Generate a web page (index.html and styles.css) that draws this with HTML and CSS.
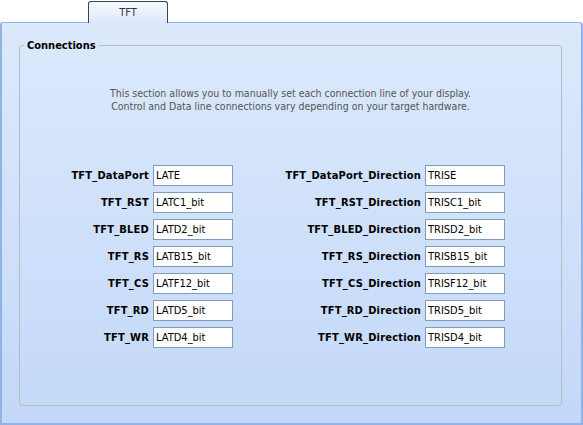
FILE: index.html
```html
<html>
    <head>
        <meta charset="utf-8">
        <link rel="stylesheet" href="styles.css">
    </head>
    <body>
        <section class="window">
            <div class="tabs">
                <div class="tab">TFT</div>
            </div>

            <div class="panel">
                <fieldset class="group">
                    <legend>Connections</legend>

                    <p class="intro">
                        This section allows you to manually set each connection line of your display.<br>
                        Control and Data line connections vary depending on your target hardware.
                    </p>

                    <div class="pins">
                        <label>TFT_DataPort</label><input type="text" value="LATE">
                        <label>TFT_DataPort_Direction</label><input type="text" value="TRISE">

                        <label>TFT_RST</label><input type="text" value="LATC1_bit">
                        <label>TFT_RST_Direction</label><input type="text" value="TRISC1_bit">

                        <label>TFT_BLED</label><input type="text" value="LATD2_bit">
                        <label>TFT_BLED_Direction</label><input type="text" value="TRISD2_bit">

                        <label>TFT_RS</label><input type="text" value="LATB15_bit">
                        <label>TFT_RS_Direction</label><input type="text" value="TRISB15_bit">

                        <label>TFT_CS</label><input type="text" value="LATF12_bit">
                        <label>TFT_CS_Direction</label><input type="text" value="TRISF12_bit">

                        <label>TFT_RD</label><input type="text" value="LATD5_bit">
                        <label>TFT_RD_Direction</label><input type="text" value="TRISD5_bit">

                        <label>TFT_WR</label><input type="text" value="LATD4_bit">
                        <label>TFT_WR_Direction</label><input type="text" value="TRISD4_bit">
                    </div>
                </fieldset>
            </div>
        </section>
    </body>
</html>
```

FILE: styles.css
```css
* { box-sizing: border-box; }

html, body {
    margin: 0;
    padding: 0;
    user-select: none;
}

body {
    font-family: "DejaVu Sans Condensed", "DejaVu Sans", sans-serif;
    font-size: 11px;
    color: #000;
    background: #fff;
}

.window {
    width: 583px;
    height: 425px;
}

.tabs {
    height: 23px;
    padding-top: 1px;
}

.tab {
    position: relative;
    z-index: 1;
    width: 80px;
    height: 22px;
    margin-left: 88px;
    border: 1px solid #3a4350;
    border-bottom: none;
    border-radius: 3px 3px 0 0;
    background: linear-gradient(#f7fafe, #dbe8fb);
    color: #333;
    text-align: center;
    line-height: 21px;
}

.panel {
    height: 403px;
    margin-top: -1px;
    border: 1px solid #8fb3e8;
    border-width: 1px 2px 2px 2px;
    border-radius: 3px 4px 0 0;
    background: linear-gradient(#dce9fc, #c3d8f8);
    padding: 16px 19px 0 17px;
}

.group {
    height: 367px;
    margin: 0;
    padding: 0;
    border: 1px solid #b8bcc2;
    border-radius: 3px;
}

.group legend {
    margin-left: 4px;
    padding: 0 3px;
    font-weight: bold;
    line-height: 13px;
}

.intro {
    margin: 35px 0 0 0;
    text-align: center;
    color: #555;
    font-size: 10.5px;
    line-height: 13px;
}

.pins {
    display: grid;
    grid-template-columns: 94px 80px 192px 80px;
    grid-auto-rows: 21px;
    row-gap: 6px;
    margin: 52px 0 0 39px;
}

.pins label {
    padding-right: 4px;
    text-align: right;
    font-weight: bold;
    letter-spacing: 0.2px;
    line-height: 21px;
    white-space: nowrap;
}

.pins input {
    width: 80px;
    height: 21px;
    margin: 0;
    padding: 0 2px;
    border: 1px solid #7f9db9;
    background: #fff;
    font-family: inherit;
    font-size: 11px;
    color: #000;
    outline: none;
}
```
